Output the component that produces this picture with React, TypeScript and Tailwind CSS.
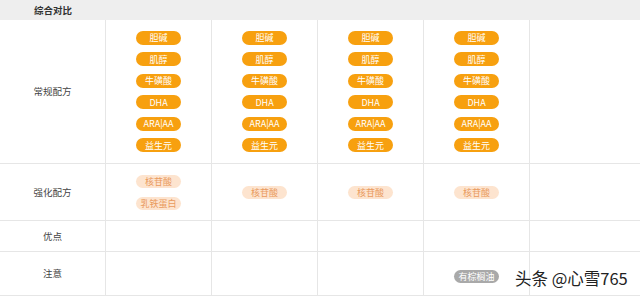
const base = ["胆碱", "肌醇", "牛磺酸", "DHA", "ARA|AA", "益生元"];
const extra = [["核苷酸", "乳铁蛋白"], ["核苷酸"], ["核苷酸"], ["核苷酸"], []];

function Pill({ text, tone }: { text: string; tone: "orange" | "peach" | "gray" }) {
  const cls =
    tone === "orange"
      ? "bg-[#f7a00f] text-white h-[14px]"
      : tone === "peach"
      ? "bg-[#fde4cf] text-[#e99a5e] h-[13px]"
      : "bg-[#a9a9a9] text-white h-[13px]";
  return (
    <div className={`w-[45px] rounded-full flex items-center justify-center text-[9px] leading-none ${cls}`}>
      {text}
    </div>
  );
}

function Label({ text }: { text: string }) {
  return (
    <div className="border-r border-b border-[#e6e6e6] flex items-center justify-center text-[9.5px] text-[#444]">
      {text}
    </div>
  );
}

export default function App() {
  const cols = [0, 1, 2, 3, 4];
  return (
    <div
      className="relative w-[640px] h-[296px] bg-white overflow-hidden"
      style={{ fontFamily: '"Noto Sans CJK SC", "Noto Sans", sans-serif' }}
    >
      <div className="h-[20px] bg-[#eeeeee] flex items-center">
        <div className="w-[106px] text-center text-[9.5px] font-bold text-[#333]">综合对比</div>
      </div>
      <div className="grid grid-cols-[106px_106px_106px_106px_106px_1fr] grid-rows-[144px_57px_31px_44px]">
        <Label text="常规配方" />
        {cols.map((c) => (
          <div
            key={"a" + c}
            className={`border-b border-[#e6e6e6] ${c < 4 ? "border-r" : ""} flex flex-col items-center justify-center gap-[7.5px]`}
          >
            {c < 4 && base.map((t) => <Pill key={t} text={t} tone="orange" />)}
          </div>
        ))}
        <Label text="强化配方" />
        {cols.map((c) => (
          <div
            key={"b" + c}
            className={`border-b border-[#e6e6e6] ${c < 4 ? "border-r" : ""} flex flex-col items-center justify-center gap-[9px]`}
          >
            {extra[c].map((t) => (
              <Pill key={t} text={t} tone="peach" />
            ))}
          </div>
        ))}
        <Label text="优点" />
        {cols.map((c) => (
          <div key={"c" + c} className={`border-b border-[#e6e6e6] ${c < 4 ? "border-r" : ""}`} />
        ))}
        <Label text="注意" />
        {cols.map((c) => (
          <div
            key={"d" + c}
            className={`border-b border-[#e6e6e6] ${c < 4 ? "border-r" : ""} flex items-center justify-center pt-[6px]`}
          >
            {c === 3 && <Pill text="有棕榈油" tone="gray" />}
          </div>
        ))}
      </div>
      <div
        className="absolute left-[515px] top-[270px] text-[16.5px] text-[#222] leading-none"
        style={{ textShadow: "0 0 2px #fff, 0 0 2px #fff, 0 0 1px #fff" }}
      >
        头条 @心雪765
      </div>
    </div>
  );
}
